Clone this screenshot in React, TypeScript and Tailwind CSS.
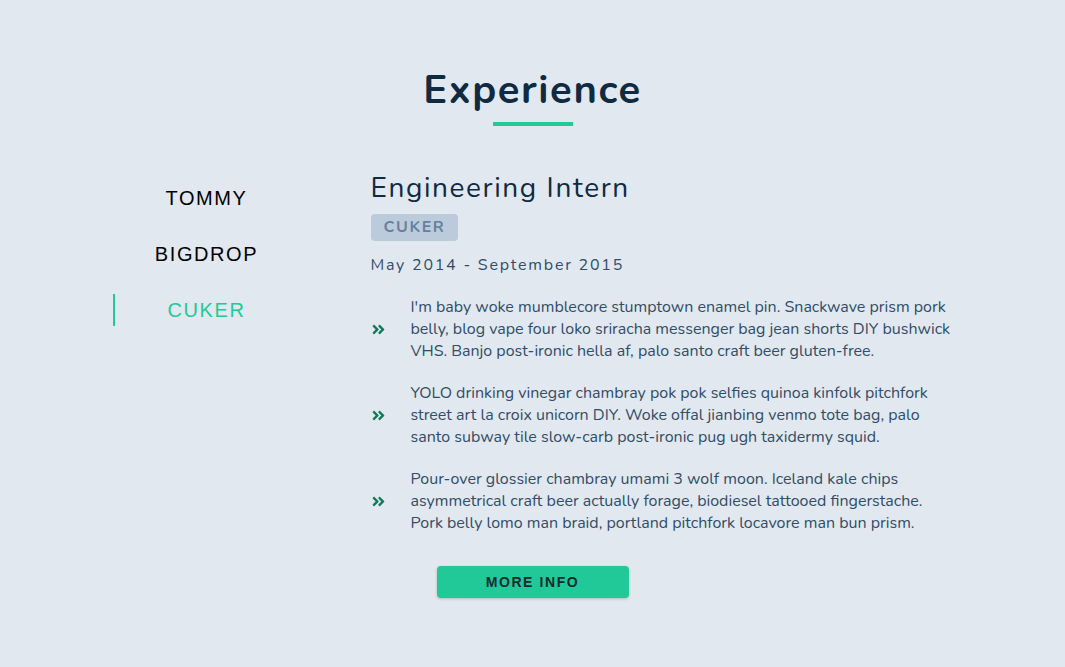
import React, { useState } from 'react';
import { FaAngleDoubleRight } from 'react-icons/fa';

const jobs = [
  {
    id: 'tommy',
    company: 'TOMMY',
    title: 'Full Stack Web Developer',
    dates: 'December 2015 - Present',
    duties: [
      'Tote bag sartorial mlkshk air plant vinyl banjo lumbersexual poke leggings offal cold-pressed brunch neutra.',
      'Hashtag drinking vinegar scenester mumblecore snackwave four dollar toast.',
    ],
  },
  {
    id: 'bigdrop',
    company: 'BIGDROP',
    title: 'Front-End Engineer',
    dates: 'May 2015 - December 2015',
    duties: [
      'Hashtag drinking vinegar scenester mumblecore snackwave four dollar toast, lumbersexual XOXO.',
    ],
  },
  {
    id: 'cuker',
    company: 'CUKER',
    title: 'Engineering Intern',
    dates: 'May 2014 - September 2015',
    duties: [
      "I'm baby woke mumblecore stumptown enamel pin. Snackwave prism pork belly, blog vape four loko sriracha messenger bag jean shorts DIY bushwick VHS. Banjo post-ironic hella af, palo santo craft beer gluten-free.",
      'YOLO drinking vinegar chambray pok pok selfies quinoa kinfolk pitchfork street art la croix unicorn DIY. Woke offal jianbing venmo tote bag, palo santo subway tile slow-carb post-ironic pug ugh taxidermy squid.',
      'Pour-over glossier chambray umami 3 wolf moon. Iceland kale chips asymmetrical craft beer actually forage, biodiesel tattooed fingerstache. Pork belly lomo man braid, portland pitchfork locavore man bun prism.',
    ],
  },
];

export default function App() {
  const [value, setValue] = useState(2);
  const job = jobs[value];

  return (
    <section
      className="min-h-[667px] w-full bg-[#e1e8f0] pt-[65px]"
      style={{ fontFamily: 'Nunito, Lato, "Noto Sans", sans-serif' }}
    >
      {/* title */}
      <div className="text-center">
        <h2 className="text-[40px] leading-[50px] font-bold tracking-[1.6px] text-[#102a42]">Experience</h2>
        <div className="mx-auto mt-[7px] h-1 w-20 bg-[#20c997]" />
      </div>

      <div className="mx-auto mt-[45px] grid w-[80vw] grid-cols-[200px_1fr] gap-x-16">
        {/* tabs */}
        <div className="mt-[11px] flex flex-col gap-6">
          {jobs.map((item, index) => (
            <button
              key={item.id}
              onClick={() => setValue(index)}
              className={
                'mx-[6px] h-8 border-l-2 pr-[2px] text-[20px] tracking-[1.6px] uppercase cursor-pointer ' +
                (index === value
                  ? 'border-[#20c997] text-[#20c997]'
                  : 'border-transparent text-black hover:border-[#20c997]')
              }
              style={{ fontFamily: '"Liberation Sans", Arial, sans-serif' }}
            >
              {item.company}
            </button>
          ))}
        </div>

        {/* job info */}
        <article>
          <h3 className="text-[28px] leading-[35px] tracking-[1.6px] text-[#102a42]">{job.title}</h3>
          <h4 className="mt-2 inline-block h-[27px] rounded bg-[#bccbdc] px-[13px] text-[16px] leading-[27px] font-bold tracking-[1.6px] text-[#6581a0] uppercase">
            {job.company}
          </h4>
          <p className="mt-3 text-[16px] leading-6 tracking-[1.77px] text-[#324d67]">{job.dates}</p>
          <div className="mt-[19px] flex flex-col gap-5">
            {job.duties.map((duty, i) => (
              <div key={i} className="grid grid-cols-[16px_1fr] items-center gap-x-6">
                <FaAngleDoubleRight className="text-[15px] text-[#0f7a5b]" />
                <p className="text-[16px] leading-[22px] text-[#324d67]">{duty}</p>
              </div>
            ))}
          </div>
        </article>
      </div>

      <button
        className="mx-auto mt-8 block h-8 w-48 rounded bg-[#20c997] text-[14px] font-bold tracking-[1.6px] text-[#0f2d2f] uppercase shadow-[0_1px_3px_rgba(0,0,0,0.2)]"
        style={{ fontFamily: '"Liberation Sans", Arial, sans-serif' }}
      >
        more info
      </button>
    </section>
  );
}
